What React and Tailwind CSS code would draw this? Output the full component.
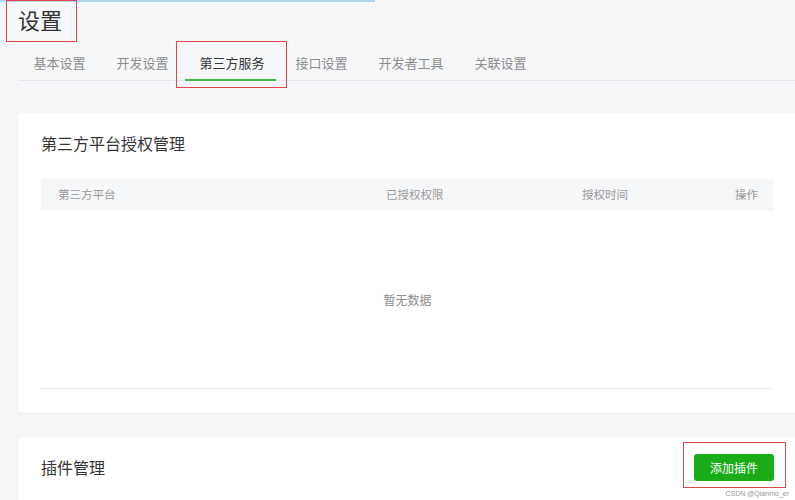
import { useState } from "react";

const tabs = ["基本设置", "开发设置", "第三方服务", "接口设置", "开发者工具", "关联设置"];

const font = { fontFamily: '"Noto Sans CJK SC", "Noto Sans", sans-serif' };

export default function App() {
  const [active, setActive] = useState(2);

  return (
    <div
      className="relative w-[795px] h-[500px] overflow-hidden bg-[#f6f7f9] text-[#353535]"
      style={font}
    >
      {/* top progress line */}
      <div className="absolute left-0 top-0 h-[2px] w-[375px] bg-[#b3d4f0]" />

      <div className="pl-[18px]">
        <h1 className="pt-[5px] h-[42px] text-[22px] leading-[28px] font-normal text-[#333]">设置</h1>

        {/* tabs */}
        <div className="flex h-[39px] border-b border-[#e7e7eb]">
          {tabs.map((t, i) => (
            <button
              key={t}
              onClick={() => setActive(i)}
              className={`relative px-[15.5px] pt-[4px] text-[13px] leading-[34px] ${
                i === active ? "text-[#353535]" : "text-[#8d8d8d]"
              }`}
            >
              {t}
              {i === active && (
                <span className="absolute left-[1px] right-[4px] -bottom-[1px] h-[2px] bg-[#44b549]" />
              )}
            </button>
          ))}
        </div>

        {/* card: third party */}
        <div className="mt-[32px] w-[782px] h-[300px] bg-white rounded-[4px] shadow-[0_1px_2px_rgba(0,0,0,0.06)] px-[23px] pt-[18px]">
          <h2 className="text-[16px] leading-[24px] font-normal text-[#353535]">第三方平台授权管理</h2>
          <div className="mt-[24px] w-[733px]">
            <div className="flex items-center h-[32px] bg-[#f6f7f9] rounded-[2px] text-[11.5px] text-[#9a9a9a]">
              <div className="w-[345px] pl-[17px]">第三方平台</div>
              <div className="w-[196px]">已授权权限</div>
              <div className="flex-1">授权时间</div>
              <div className="pr-[16px]">操作</div>
            </div>
            <div className="h-[178px] flex items-center justify-center border-b border-[#ececef] text-[12px] text-[#8d8d8d]">
              暂无数据
            </div>
          </div>
        </div>

        {/* card: plugins */}
        <div className="mt-[24px] w-[782px] h-[80px] bg-white rounded-[4px] shadow-[0_1px_2px_rgba(0,0,0,0.06)] pl-[23px] pr-[26px] pt-[17px] flex justify-between">
          <h2 className="text-[16px] leading-[24px] mt-[1px] font-normal text-[#353535]">插件管理</h2>
          <button className="w-[80px] h-[27px] rounded-[3px] bg-[#1aad19] text-white text-[12px]">
            添加插件
          </button>
        </div>
      </div>

      {/* annotation boxes */}
      <div className="absolute left-[6px] top-0 w-[71px] h-[42px] border-[1.5px] border-[#e0474c]" />
      <div className="absolute left-[176px] top-[41px] w-[111px] h-[47px] border-[1.5px] border-[#e0474c]" />
      <div className="absolute left-[683px] top-[442px] w-[103px] h-[46px] border-[1.5px] border-[#e0474c]" />

      <div className="absolute right-[6px] bottom-[2px] text-[7px] leading-[8px] text-[#9a9a9a]" style={{ fontFamily: '"Liberation Sans", sans-serif' }}>
        CSDN @Qianmo_er
      </div>
    </div>
  );
}
